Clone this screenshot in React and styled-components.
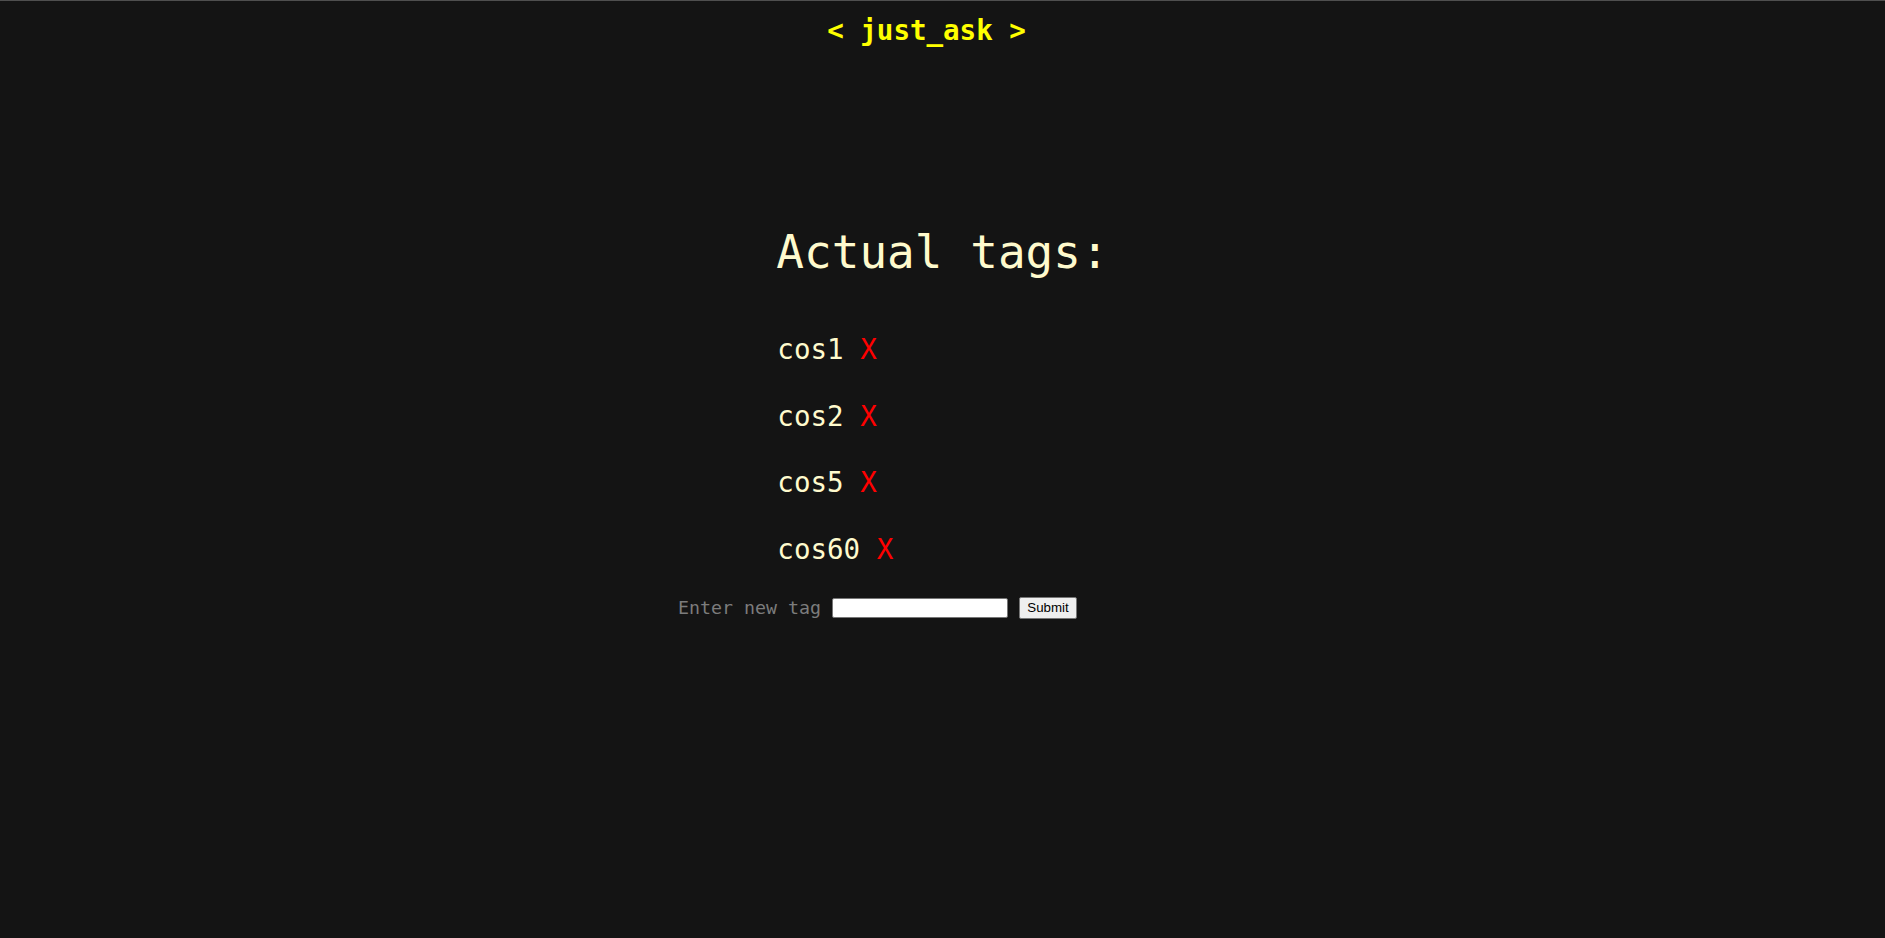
import React, { useState } from 'react';
import styled, { createGlobalStyle } from 'styled-components';

const GlobalStyle = createGlobalStyle`
  html, body {
    margin: 0;
    padding: 0;
    background: #141414;
  }
  body {
    min-height: 100vh;
    border-top: 1px solid #4f4f4f;
    box-sizing: border-box;
    font-family: 'DejaVu Sans Mono', 'Liberation Mono', monospace;
  }
`;

const Page = styled.div`
  display: flex;
  flex-direction: column;
  align-items: center;
  min-height: 937px;
  background: #141414;
`;

const Header = styled.header`
  height: 61px;
  box-sizing: border-box;
  display: flex;
  align-items: center;
  justify-content: center;
  padding: 0 32px 4px 0;
  color: #ffff00;
  font-weight: bold;
  font-size: 27.5px;
  white-space: pre;
`;

const TagsBlock = styled.section`
  display: flex;
  flex-direction: column;
  align-items: flex-start;
  margin-top: 162px;
`;

const Title = styled.h1`
  margin: 0;
  font-size: 46px;
  font-weight: normal;
  line-height: 56px;
  color: #fffacd;
`;

const TagList = styled.ul`
  list-style: none;
  margin: 53px 0 0;
  padding: 0 0 0 1px;
  display: flex;
  flex-direction: column;
  gap: 34.5px;
`;

const TagRow = styled.li`
  font-size: 27.5px;
  line-height: 32px;
  color: #fffacd;
  white-space: pre;
`;

const Remove = styled.span`
  color: #ff0000;
  cursor: pointer;
`;

const Form = styled.form`
  display: flex;
  align-items: center;
  margin: 32px 130px 0 0;
  height: 22px;
`;

const Label = styled.label`
  color: #7c7c7c;
  font-size: 18.3px;
  margin-right: 11px;
`;

const Input = styled.input`
  width: 176px;
  height: 20px;
  box-sizing: border-box;
  border: 1px solid #767676;
  border-radius: 2px;
  background: #fff;
  padding: 1px 2px;
  margin: 0 11px 0 0;
`;

const SubmitButton = styled.button`
  width: 58px;
  height: 22px;
  box-sizing: border-box;
  font-family: 'Liberation Sans', Arial, sans-serif;
  font-size: 13.3px;
  color: #000;
  background: #efefef;
  border: 1px solid #767676;
  border-radius: 2px;
  padding: 0 6px;
`;

export default function App() {
  const [tags, setTags] = useState(['cos1', 'cos2', 'cos5', 'cos60']);
  const [value, setValue] = useState('');

  const handleSubmit = (e) => {
    e.preventDefault();
    if (!value.trim()) return;
    setTags([...tags, value.trim()]);
    setValue('');
  };

  return (
    <>
      <GlobalStyle />
      <Page>
        <Header>{'< just_ask >'}</Header>
        <TagsBlock>
          <Title>Actual tags:</Title>
          <TagList>
            {tags.map((t) => (
              <TagRow key={t}>
                {t} <Remove onClick={() => setTags(tags.filter((x) => x !== t))}>X</Remove>
              </TagRow>
            ))}
          </TagList>
        </TagsBlock>
        <Form onSubmit={handleSubmit}>
          <Label htmlFor="tag">Enter new tag</Label>
          <Input id="tag" value={value} onChange={(e) => setValue(e.target.value)} />
          <SubmitButton type="submit">Submit</SubmitButton>
        </Form>
      </Page>
    </>
  );
}
